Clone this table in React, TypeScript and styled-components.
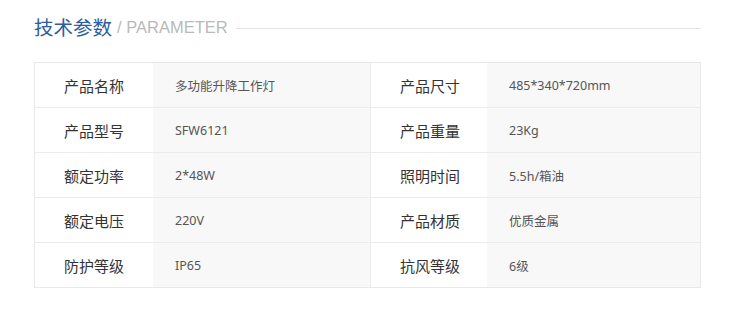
import styled, { createGlobalStyle } from "styled-components";

const GlobalStyle = createGlobalStyle`
  body {
    margin: 0;
    background: #fff;
    font-family: "Noto Sans CJK SC", "Noto Sans", sans-serif;
  }
`;

const specs: [string, string, string, string][] = [
  ["产品名称", "多功能升降工作灯", "产品尺寸", "485*340*720mm"],
  ["产品型号", "SFW6121", "产品重量", "23Kg"],
  ["额定功率", "2*48W", "照明时间", "5.5h/箱油"],
  ["额定电压", "220V", "产品材质", "优质金属"],
  ["防护等级", "IP65", "抗风等级", "6级"],
];

const App = () => {
  return (
    <Page>
      <GlobalStyle />
      <Heading>
        <Title>技术参数</Title>
        <SubTitle>/ PARAMETER</SubTitle>
        <Rule />
      </Heading>
      <SpecTable>
        {specs.map(([l1, v1, l2, v2], i) => (
          <Row key={l1} last={i === specs.length - 1}>
            <Label>{l1}</Label>
            <Value>{v1}</Value>
            <Label divided>{l2}</Label>
            <Value>{v2}</Value>
          </Row>
        ))}
      </SpecTable>
    </Page>
  );
};

export default App;

const Page = styled.div`
  width: 750px;
  height: 317px;
  padding: 13px 49px 0 34px;
  box-sizing: border-box;
`;

const Heading = styled.div`
  display: flex;
  align-items: center;
  height: 28px;
`;

const Title = styled.span`
  font-size: 19.5px;
  color: #2b5d9f;
  line-height: 28px;
`;

const SubTitle = styled.span`
  font-family: "Liberation Sans", "Noto Sans", sans-serif;
  font-size: 16.5px;
  color: #b9b9b9;
  margin-left: 5px;
  line-height: 28px;
`;

const Rule = styled.div`
  flex: 1;
  height: 1px;
  background: #e3e3e3;
  margin-left: 8px;
  margin-top: 2px;
`;

const SpecTable = styled.div`
  margin-top: 21px;
  border: 1px solid #e8e8e8;
  display: flex;
  flex-direction: column;
`;

const Row = styled.div<{ last?: boolean }>`
  display: grid;
  grid-template-columns: 118px 217px 117px 1fr;
  height: 44px;
  border-bottom: ${(p) => (p.last ? "none" : "1px solid #ebebeb")};
`;

const Label = styled.div<{ divided?: boolean }>`
  display: flex;
  align-items: center;
  padding-left: 29px;
  border-left: ${(p) => (p.divided ? "1px solid #ebebeb" : "none")};
  font-size: 15px;
  color: #333;
  background: #fff;
`;

const Value = styled.div`
  display: flex;
  align-items: center;
  padding-left: 22px;
  font-family: "Noto Sans", "Noto Sans CJK SC", sans-serif;
  font-size: 12.5px;
  color: #555;
  background: #f8f8f8;
`;
